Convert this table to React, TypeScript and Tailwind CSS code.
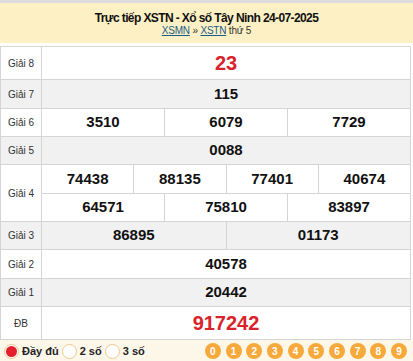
import React from "react";

type Row = {
  label: string;
  lines: string[][];
  heights: string[];
  gray?: boolean;
  red?: boolean;
};

const rows: Row[] = [
  { label: "Giải 8", lines: [["23"]], heights: ["h-[33px]"], red: true },
  { label: "Giải 7", lines: [["115"]], heights: ["h-[29px]"], gray: true },
  { label: "Giải 6", lines: [["3510", "6079", "7729"]], heights: ["h-[28px]"] },
  { label: "Giải 5", lines: [["0088"]], heights: ["h-[28px]"], gray: true },
  {
    label: "Giải 4",
    lines: [
      ["74438", "88135", "77401", "40674"],
      ["64571", "75810", "83897"],
    ],
    heights: ["h-[29px]", "h-[28px]"],
  },
  { label: "Giải 3", lines: [["86895", "01173"]], heights: ["h-[28px]"], gray: true },
  { label: "Giải 2", lines: [["40578"]], heights: ["h-[29px]"] },
  { label: "Giải 1", lines: [["20442"]], heights: ["h-[28px]"], gray: true },
  { label: "ĐB", lines: [["917242"]], heights: ["h-[33px]"], red: true },
];

const PrizeRow: React.FC<{ row: Row }> = ({ row }) => {
  const bg = row.gray ? "bg-[#f1f1f1]" : "bg-white";
  return (
    <div className={`flex ${bg}`}>
      <div className="w-[41px] shrink-0 flex items-center justify-center border-r border-b border-[#d5d5d5] text-[10px] text-[#333]">
        {row.label}
      </div>
      <div className="flex-1 flex flex-col">
        {row.lines.map((line, i) => (
          <div key={i} className={`flex ${row.heights[i]}`}>
            {line.map((num, j) => (
              <div
                key={j}
                className={`flex-1 flex items-center justify-center border-r border-b border-[#d5d5d5] font-bold ${
                  row.red ? "text-[20px] text-[#d8232a]" : "text-[15px] text-[#111]"
                }`}
              >
                {num}
              </div>
            ))}
          </div>
        ))}
      </div>
    </div>
  );
};

const Radio: React.FC<{ label: string; checked?: boolean }> = ({ label, checked }) => (
  <label className="flex items-center gap-[3px] mr-[3px]">
    <span className="w-[15px] h-[15px] rounded-full border border-[#f0c88c] bg-white flex items-center justify-center">
      {checked && <span className="w-[11px] h-[11px] rounded-full bg-[#e3202b]" />}
    </span>
    <span className="text-[11px] font-bold text-[#222]">{label}</span>
  </label>
);

export default function App() {
  return (
    <div className="w-[413px] h-[361px] bg-white font-['Liberation_Sans',Arial,sans-serif] overflow-hidden">
      <div className="h-[3px] bg-[#dcdcdc]" />
      <div className="h-[40px] bg-[#fcf0c4] flex flex-col items-center justify-center pt-[2px]">
        <div className="text-[12px] font-bold text-[#111] leading-[14px] tracking-[-0.6px]">
          Trực tiếp XSTN - Xổ số Tây Ninh 24-07-2025
        </div>
        <div className="text-[10px] text-[#333] leading-[12px] tracking-[-0.2px]">
          <a className="text-[#1b5c8a] underline">XSMN</a> »{" "}
          <a className="text-[#1b5c8a] underline">XSTN</a> thứ 5
        </div>
      </div>
      <div className="h-[3px]" />
      <div className="w-[411px] border-t border-l border-[#d5d5d5]">
        {rows.map((r) => (
          <PrizeRow key={r.label} row={r} />
        ))}
      </div>
      <div className="h-[22px] bg-[#fdf7ea] flex items-center pl-[4px] pr-[6px]">
        <Radio label="Đầy đủ" checked />
        <Radio label="2 số" />
        <Radio label="3 số" />
        <div className="ml-auto flex gap-[4.7px]">
          {["0", "1", "2", "3", "4", "5", "6", "7", "8", "9"].map((d) => (
            <span
              key={d}
              className="w-[16px] h-[16px] rounded-full bg-[#f7a93b] text-white text-[10px] font-bold flex items-center justify-center"
            >
              {d}
            </span>
          ))}
        </div>
      </div>
    </div>
  );
}
